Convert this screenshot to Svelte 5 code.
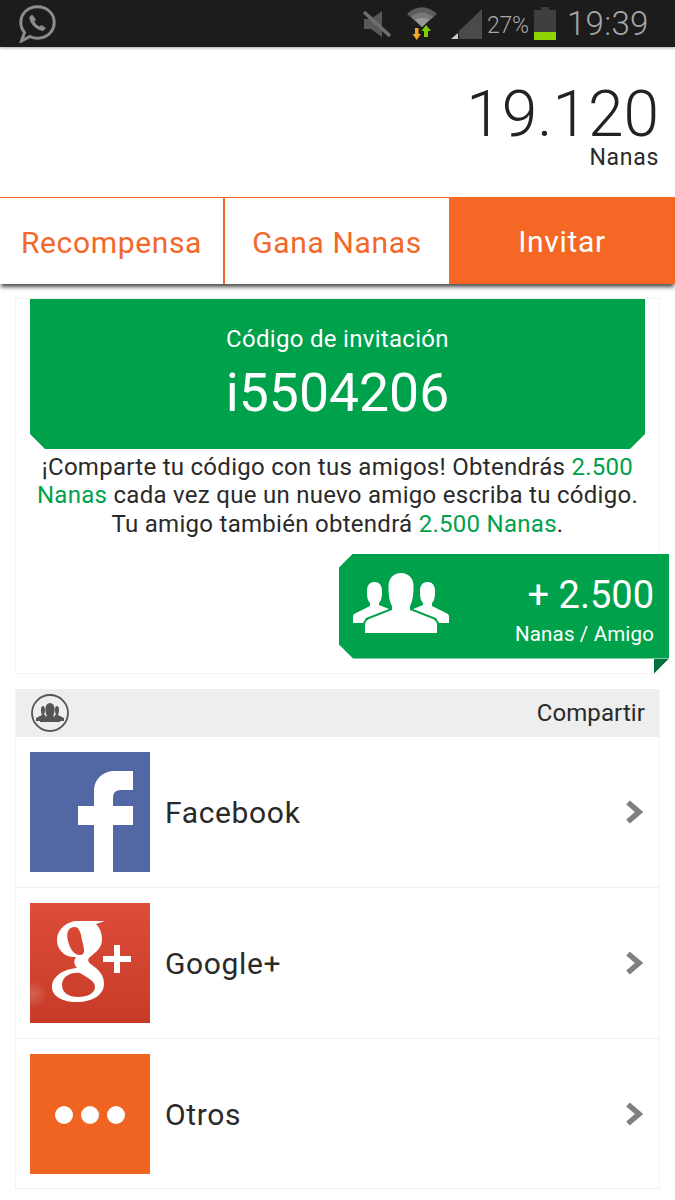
<script>
  const rows = [
    { name: 'Facebook', kind: 'fb' },
    { name: 'Google+', kind: 'gp' },
    { name: 'Otros', kind: 'ot' }
  ];
</script>

<div class="page">
  <header class="status">
    <svg class="wa" width="37" height="38" viewBox="0 0 37 38" fill="none">
      <path d="M2.500 36 L5.500 27.500 C3 24.500 1.800 21 1.800 17.500 C1.800 8.500 9 1.800 18.500 1.800 C28 1.800 35.200 8.500 35.200 17.500 C35.200 26.500 28 33.200 18.500 33.200 C15.800 33.200 13.300 32.700 11 31.500 Z" stroke="#8c8c8c" stroke-width="3"/>
      <path d="M13 9.500 L10.500 12 C10 17 16 25 24 26 L27 23 L22.500 20 L20.500 21.500 C18 20.500 16.500 18.500 15.500 16.500 L17 14.500 Z" fill="#8c8c8c"/>
    </svg>
    <div class="status-right">
      <svg class="mute" width="28" height="26" viewBox="0 0 28 26">
        <path d="M1 8 H8 L19 0 V26 L8 18 H1 Z" fill="#585858"/>
        <path d="M1 1 L27 25" stroke="#6e6e6e" stroke-width="3.500"/>
      </svg>
      <svg class="wifi" width="30" height="33" viewBox="0 0 30 33">
        <path d="M0 7 C9 -2 21 -2 30 7 L15 20 Z" fill="#5c5c5c"/>
        <path d="M4 10 C11 4 19 4 26 10 L15 20 Z" fill="#777"/>
        <path d="M8 13 C12 10 18 10 22 13 L15 20 Z" fill="#999"/>
        <path d="M8 21 H11.500 V27 H14 L9.700 33 L5.500 27 H8 Z" fill="#f5a623"/>
        <path d="M17 30 H21 V24 H24 L19 18 L14.500 24 H17 Z" fill="#7ed000"/>
      </svg>
      <svg class="signal" width="31" height="30" viewBox="0 0 31 30">
        <path d="M31 0 V30 H8 V22 Z" fill="#4a4a4a"/>
        <path d="M0 30 L7 24 V30 Z" fill="#cfcfcf"/>
      </svg>
      <span class="pct">27%</span>
      <svg class="batt" width="22" height="33" viewBox="0 0 22 33">
        <rect x="7" y="0" width="8" height="3" fill="#3c3c3c"/>
        <rect x="0" y="3" width="22" height="30" fill="#3f3f3f"/>
        <rect x="0" y="25" width="22" height="8" fill="#8fd400"/>
      </svg>
      <span class="clock">19:39</span>
    </div>
  </header>

  <section class="balance">
    <div class="amount">19.120</div>
    <div class="unit">Nanas</div>
  </section>

  <nav class="tabs">
    <div class="tab">Recompensa</div>
    <div class="tab second">Gana Nanas</div>
    <div class="tab active">Invitar</div>
  </nav>

  <main class="content">
    <section class="card invite">
      <div class="code">
        <div class="code-label">Código de invitación</div>
        <div class="code-value">i5504206</div>
      </div>
      <p class="desc">
        ¡Comparte tu código con tus amigos! Obtendrás <em>2.500<br />Nanas</em> cada vez que un nuevo amigo escriba tu código.<br />
        Tu amigo también obtendrá <em>2.500 Nanas</em>.
      </p>
      <div class="badge-wrap">
        <div class="badge">
          <svg width="96" height="60" viewBox="0 0 96 60" fill="#fff">
            <path d="M0 50 V43 Q0 41 3 40 L17 33 V30 C14 27 14 22 14 18 C14 12 17 9 21.500 9 C26 9 29 12 29 18 C29 22 29 27 26 30 V32 L36 36 L13 45 L10 50 Z"/>
            <path transform="translate(96 0) scale(-1 1)" d="M0 50 V43 Q0 41 3 40 L17 33 V30 C14 27 14 22 14 18 C14 12 17 9 21.500 9 C26 9 29 12 29 18 C29 22 29 27 26 30 V32 L36 36 L13 45 L10 50 Z"/>
            <path d="M12 60 V52 Q12 48 16 46 L39 37 V33 C36 28 35.500 20 35.500 13 C35.500 5 41 0 48 0 C55 0 60.500 5 60.500 13 C60.500 20 60 28 57 33 V37 L80 46 Q84 48 84 52 V60 Z"/>
          </svg>
          <div class="badge-text">
            <div class="badge-num">+ 2.500</div>
            <div class="badge-sub">Nanas / Amigo</div>
          </div>
        </div>
        <span class="fold"></span>
      </div>
    </section>

    <section class="card share">
      <div class="share-head">
        <svg width="38" height="38" viewBox="0 0 38 38">
          <circle cx="19" cy="19" r="18" fill="none" stroke="#555" stroke-width="1.800"/>
          <g fill="#555">
            <path d="M5 27 V24 L11 21 C9.500 18 9.500 12 12 12 C14.500 12 14.500 18 13 20.500 L15 22 L10 27 Z"/>
            <path d="M33 27 V24 L27 21 C28.500 18 28.500 12 26 12 C23.500 12 23.500 18 25 20.500 L23 22 L28 27 Z"/>
            <path d="M9 28 V25.500 L16 22 C13.500 18 13.500 9 19 9 C24.500 9 24.500 18 22 22 L29 25.500 V28 Z"/>
          </g>
        </svg>
        <span>Compartir</span>
      </div>
      {#each rows as row}
        <div class="row">
          {#if row.kind === 'fb'}
            <svg class="ico" width="120" height="120" viewBox="0 0 120 120">
              <rect width="120" height="120" fill="#5268a5"/>
              <path d="M64 120 V73 H48 V54 H64 V39 C64 27 73 19 85 19 H103 V38 H92 C86 38 83 40 83 46 V54 H103 V73 H83 V120 Z" fill="#fff"/>
            </svg>
          {:else if row.kind === 'gp'}
            <svg class="ico" width="120" height="120" viewBox="0 0 120 120">
              <defs>
                <linearGradient id="gpbg" x1="0" y1="0" x2="0" y2="1">
                  <stop offset="0" stop-color="#dd4d39"/>
                  <stop offset="1" stop-color="#c63b28"/>
                </linearGradient>
                <radialGradient id="gpglow">
                  <stop offset="0" stop-color="#fff" stop-opacity="0.18"/>
                  <stop offset="1" stop-color="#fff" stop-opacity="0"/>
                </radialGradient>
              </defs>
              <rect width="120" height="120" fill="url(#gpbg)"/>
              <circle cx="3" cy="91" r="14" fill="url(#gpglow)"/>
              <path fill="#fff" fill-rule="evenodd" d="M75 18 L66 21 C70 25 72 30 72 36 C72 45 66 49 60 54 C57 57 58 59 62 62 C69 67 74 72 74 81 C74 92 62 99 47 99 C32 99 22 93 22 84 C22 73 34 66 47 65 C43 60 44 57 46 54 C35 55 27 47 27 37 C27 26 37 18 48 18 Z M45 24 C38 24 36 30 38 38 C40 46 44 52 50 52 C56 52 54 45 52 37 C51 30 49 24 45 24 Z M50 70 C40 69 32 74 32 82 C32 90 39 94 48 94 C58 94 65 90 65 84 C65 78 58 75 50 70 Z"/>
              <path fill="#fff" d="M84 42 H90 V53 H101 V59 H90 V70 H84 V59 H73 V53 H84 Z"/>
            </svg>
          {:else}
            <svg class="ico" width="120" height="120" viewBox="0 0 120 120">
              <rect width="120" height="120" fill="#ee6420"/>
              <circle cx="34" cy="61" r="9" fill="#fff"/>
              <circle cx="60" cy="61" r="9" fill="#fff"/>
              <circle cx="86" cy="61" r="9" fill="#fff"/>
            </svg>
          {/if}
          <span class="row-name">{row.name}</span>
          <svg class="chev" width="18" height="24" viewBox="0 0 18 24">
            <path d="M3 2.500 L14 12 L3 21.500" fill="none" stroke="#808080" stroke-width="5.500"/>
          </svg>
        </div>
      {/each}
    </section>
  </main>
</div>

<style>
  :global(body) {
    margin: 0;
    background: #fff;
  }
  .page {
    width: 675px;
    height: 1200px;
    overflow: hidden;
    font-family: Roboto, "Liberation Sans", sans-serif;
    color: #2a2a2a;
    background: #fff;
  }
  .status {
    height: 47px;
    background: #1c1c1c;
    display: flex;
    align-items: center;
    justify-content: space-between;
    padding: 0 28px 0 19px;
    box-shadow: 0 1px 3px rgba(0, 0, 0, 0.35);
    position: relative;
  }
  .status-right {
    display: flex;
    align-items: center;
  }
  .wifi {
    margin-left: 16px;
  }
  .signal {
    margin-left: 14px;
  }
  .pct {
    width: 41px;
    margin-left: 5px;
    font-size: 23px;
    color: #a8a8a8;
    font-weight: 300;
    letter-spacing: -0.3px;
    white-space: nowrap;
    padding-top: 3px;
  }
  .batt {
    margin-left: 6px;
  }
  .clock {
    width: 80px;
    margin-left: 11px;
    font-size: 33px;
    letter-spacing: 0.3px;
    color: #a8a8a8;
    font-weight: 300;
    white-space: nowrap;
  }
  .balance {
    height: 150px;
    box-sizing: border-box;
    padding: 39px 16px 0 0;
    text-align: right;
  }
  .amount {
    font-size: 64px;
    line-height: 58px;
    font-weight: 300;
    color: #222;
  }
  .unit {
    font-size: 23px;
    line-height: 27px;
    letter-spacing: 0.7px;
  }
  .tabs {
    display: grid;
    grid-template-columns: 225px 224px 226px;
    height: 87px;
    box-sizing: border-box;
    border-top: 1px solid #f4672a;
    box-shadow: 0 4px 4px -1px rgba(0, 0, 0, 0.7);
    position: relative;
  }
  .tab {
    display: flex;
    align-items: center;
    justify-content: center;
    font-size: 30px;
    letter-spacing: 0.65px;
    color: #f4672a;
    box-sizing: border-box;
    border-right: 2px solid #f4672a;
    padding-top: 2px;
  }
  .tab.second {
    border-right: 0;
  }
  .tab.active {
    background: #f56724;
    color: #fff;
    border-right: 0;
    margin-top: -1px;
  }
  .content {
    padding: 14px 15px 0;
  }
  .card {
    box-sizing: border-box;
    border: 1px solid #f3f3f3;
    background: #fff;
  }
  .invite {
    height: 376px;
    padding: 0 14px;
  }
  .code {
    height: 150px;
    background: #00a14b;
    color: #fff;
    text-align: center;
    clip-path: polygon(0 0, 100% 0, 100% 135px, 600px 100%, 15px 100%, 0 135px);
    padding-top: 25px;
    box-sizing: border-box;
  }
  .code-label {
    font-size: 24px;
    line-height: 30px;
    letter-spacing: 0.3px;
  }
  .code-value {
    font-size: 53.500px;
    line-height: 62px;
    margin-top: 8px;
  }
  .desc {
    margin: 3.500px -10px 0;
    font-size: 24px;
    line-height: 28.500px;
    text-align: center;
    color: #2a2a2a;
    white-space: nowrap;
    letter-spacing: 0.28px;
  }
  .desc em {
    font-style: normal;
    color: #00a14b;
  }
  .badge-wrap {
    margin: 15.500px -24px 0 auto;
    width: 330px;
    position: relative;
  }
  .badge {
    height: 105px;
    background: #00a14b;
    clip-path: polygon(14px 0, 100% 0, 100% 100%, 14px 100%, 0 91px, 0 14px);
    display: flex;
    align-items: center;
    justify-content: space-between;
    color: #fff;
    padding: 0 15px 0 14px;
    box-sizing: border-box;
  }
  .badge svg {
    margin-top: -7px;
  }
  .badge-text {
    text-align: right;
    padding-top: 8px;
  }
  .badge-num {
    font-size: 38px;
    line-height: 44px;
  }
  .badge-sub {
    font-size: 20.500px;
    line-height: 26px;
    margin-top: 4px;
    letter-spacing: 0.15px;
  }
  .fold {
    position: absolute;
    right: 0;
    top: 100%;
    width: 15px;
    height: 15px;
    background: #00703a;
    clip-path: polygon(0 0, 100% 0, 0 100%);
  }
  .share {
    margin-top: 15px;
    height: 500px;
    border-top: 0;
  }
  .share-head {
    height: 48px;
    background: #eee;
    display: flex;
    align-items: center;
    justify-content: space-between;
    padding: 0 14px 0 15px;
    font-size: 24px;
    letter-spacing: 0.1px;
  }
  .row {
    height: 151px;
    box-sizing: border-box;
    display: flex;
    align-items: center;
    padding: 0 16px 0 14px;
    border-bottom: 1px solid #f0f0f0;
  }
  .row:last-child {
    border-bottom: 0;
    height: 150px;
  }
  .row-name {
    margin-left: 15px;
    font-size: 30px;
    letter-spacing: 0.65px;
    flex: 1;
  }
  .ico {
    display: block;
    flex: none;
  }
</style>
